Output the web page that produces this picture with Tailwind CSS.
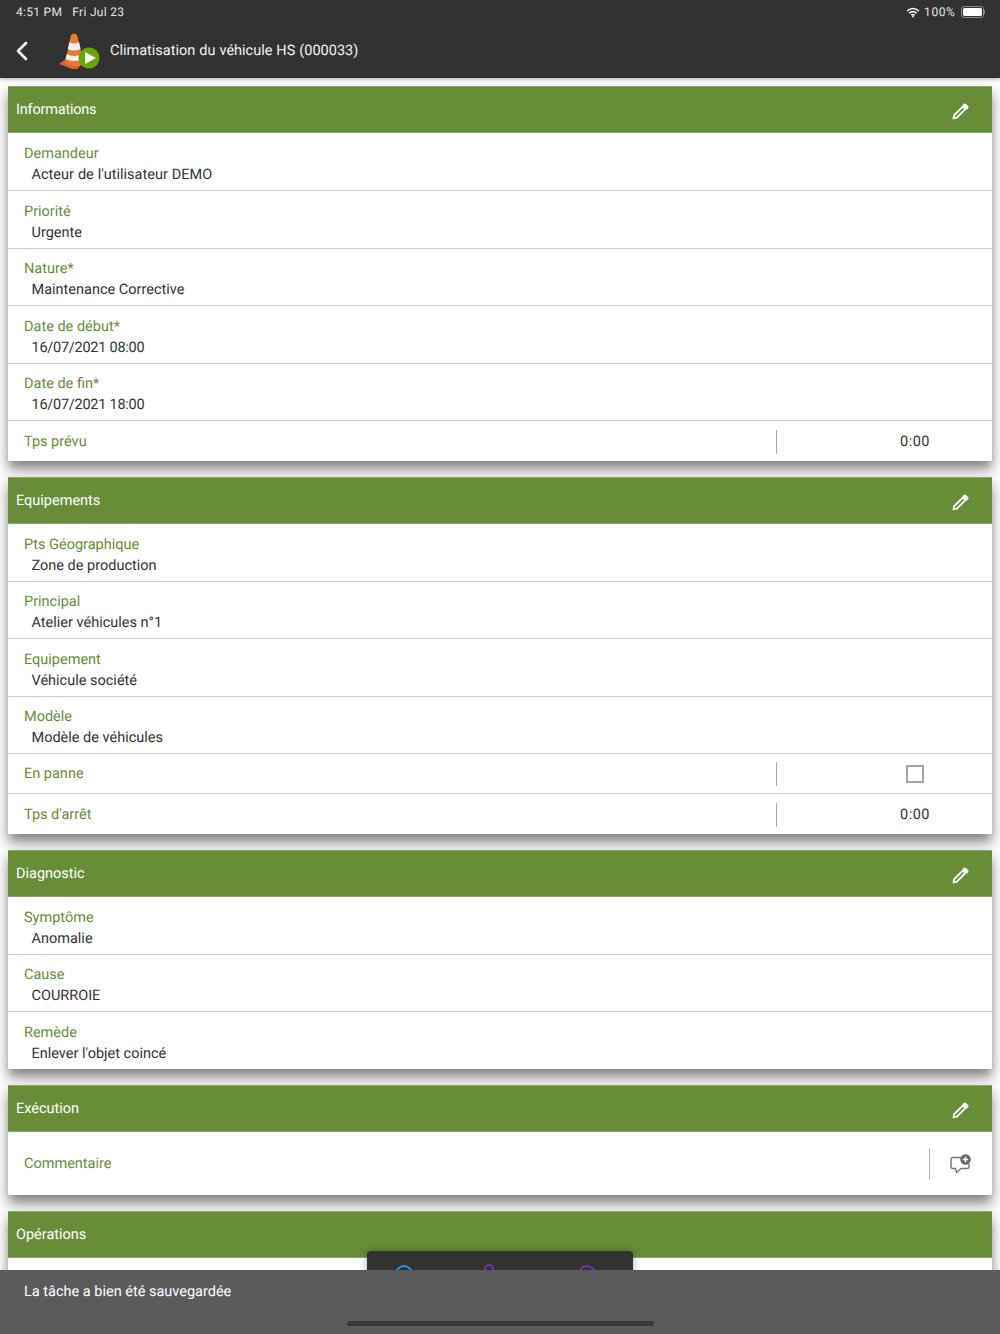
<!DOCTYPE html>
<html lang="fr">
<head>
    <meta charset="UTF-8">
    <title>Climatisation du véhicule HS</title>
    <script src="https://cdn.jsdelivr.net/npm/@tailwindcss/browser@4"></script>
</head>
<body class="font-['Roboto',sans-serif] bg-white [text-rendering:geometricPrecision]">
<div class="relative w-[1000px] h-[1334px] overflow-hidden bg-white">

    <!-- header -->
    <header class="h-[78px] bg-[#323232] text-white shadow-[0_1px_4px_rgba(0,0,0,0.35)] relative z-10">
        <div class="h-[24px] flex items-center justify-between pl-4 pr-[15px] text-[12px] text-[#e4e4e4] tracking-[0.3px]">
            <div class="flex gap-[10px]"><span>4:51 PM</span><span>Fri Jul 23</span></div>
            <div class="flex items-center gap-[4px]">
                <svg width="14" height="11" viewBox="0 0 14 11" fill="none" stroke="#fff" stroke-width="1.6">
                    <path d="M1 4 Q7 -1 13 4"/><path d="M3.2 6.2 Q7 3 10.8 6.2"/><path d="M5.3 8.2 Q7 7 8.7 8.2"/>
                    <circle cx="7" cy="9.5" r="0.9" fill="#fff" stroke="none"/>
                </svg>
                <span class="tracking-[0.6px]">100%</span>
                <div class="flex items-center ml-[1px]">
                    <div class="w-[23px] h-[12px] rounded-[3px] border border-[#8a8a8a] p-[1px]"><div class="w-full h-full bg-white rounded-[1.5px]"></div></div>
                    <div class="w-[1.5px] h-[4px] bg-[#8a8a8a] rounded-r"></div>
                </div>
            </div>
        </div>
        <div class="h-[54px] flex items-center">
            <svg class="ml-[16px]" width="13" height="20" viewBox="0 0 13 20" fill="none" stroke="#fff" stroke-width="2.6" stroke-linecap="round" stroke-linejoin="round"><path d="M10 2 L2 10 L10 18"/></svg>
            <svg class="ml-[29px]" width="42" height="40" viewBox="0 0 42 40">
                <path d="M1 33 L9 27 L27 30 L19 38 L14 38 Z" fill="#d9662a"/>
                <path d="M13 4 Q16 1 19 4 L26 33 Q16 38 7 32 Z" fill="#ea7a30"/>
                <path d="M11.5 11 Q16 14 21 11 L22.6 18 Q16 21 9.8 18 Z" fill="#f2f0ec"/>
                <path d="M8.8 23 Q16 27 24 23 L25 28 Q16 32 7.5 28 Z" fill="#f2f0ec"/>
                <circle cx="31" cy="27" r="10.5" fill="#6aa510"/>
                <path d="M27 21 L38 27 L27 33 Z" fill="#f7f7ef"/>
            </svg>
            <span class="ml-[10px] text-[14.5px] text-[#f2f2f2] [word-spacing:0.4px]">Climatisation du véhicule HS (000033)</span>
        </div>
    </header>

    <main class="pt-2 flex flex-col gap-4 px-2 text-[14.5px]">

        <!-- Informations -->
        <section class="bg-white shadow-[0_8px_12px_rgba(0,0,0,0.5)]">
            <div class="h-[47px] bg-[#678d39] border-y border-[#8ba769] text-white flex items-center justify-between pl-2 pr-[23px]">
                <span class="tracking-[-0.2px]">Informations</span>
                <svg class="mt-1" width="17" height="17" viewBox="0 0 17 17" fill="none" stroke="#fff" stroke-width="1.8" stroke-linejoin="round"><path d="M1.5 15.5 L2.3 12 L10.8 3.6 L13.3 6.1 L4.9 14.6 Z"/><path d="M12 1.8 Q12.8 1 13.6 1.8 L15.2 3.4 Q16 4.2 15.2 5 L14.6 5.6 L11.4 2.4 Z" fill="#fff"/></svg>
            </div>
            <div class="h-[58px] border-b border-[#cfcfcf] pl-4 pt-[11.5px]"><div class="leading-[18px] text-[#678d39]">Demandeur</div><div class="leading-[18px] mt-[3px] pl-[7.5px] text-[#333] [word-spacing:0.4px]">Acteur de l'utilisateur DEMO</div></div>
            <div class="h-[57.5px] border-b border-[#cfcfcf] pl-4 pt-[11.5px]"><div class="leading-[18px] text-[#678d39]">Priorité</div><div class="leading-[18px] mt-[3px] pl-[7.5px] text-[#333]">Urgente</div></div>
            <div class="h-[57.5px] border-b border-[#cfcfcf] pl-4 pt-[11.5px]"><div class="leading-[18px] text-[#678d39]">Nature*</div><div class="leading-[18px] mt-[3px] pl-[7.5px] text-[#333]">Maintenance Corrective</div></div>
            <div class="h-[57.5px] border-b border-[#cfcfcf] pl-4 pt-[11.5px]"><div class="leading-[18px] text-[#678d39]">Date de début*</div><div class="leading-[18px] mt-[3px] pl-[7.5px] text-[#333] tracking-[-0.25px]">16/07/2021 08:00</div></div>
            <div class="h-[57.5px] border-b border-[#cfcfcf] pl-4 pt-[11.5px]"><div class="leading-[18px] text-[#678d39]">Date de fin*</div><div class="leading-[18px] mt-[3px] pl-[7.5px] text-[#333] tracking-[-0.25px]">16/07/2021 18:00</div></div>
            <div class="h-[40px] pl-4 pt-[1px] flex items-center">
                <span class="flex-1 text-[#678d39]">Tps prévu</span>
                <div class="w-[216px] h-[24px] border-l border-[#a8a8a8] flex items-center justify-center pl-[61px] text-[#333] tracking-[0.5px]">0:00</div>
            </div>
        </section>

        <!-- Equipements -->
        <section class="bg-white shadow-[0_8px_12px_rgba(0,0,0,0.5)]">
            <div class="h-[47px] bg-[#678d39] border-y border-[#8ba769] text-white flex items-center justify-between pl-2 pr-[23px]">
                <span>Equipements</span>
                <svg class="mt-1" width="17" height="17" viewBox="0 0 17 17" fill="none" stroke="#fff" stroke-width="1.8" stroke-linejoin="round"><path d="M1.5 15.5 L2.3 12 L10.8 3.6 L13.3 6.1 L4.9 14.6 Z"/><path d="M12 1.8 Q12.8 1 13.6 1.8 L15.2 3.4 Q16 4.2 15.2 5 L14.6 5.6 L11.4 2.4 Z" fill="#fff"/></svg>
            </div>
            <div class="h-[57.5px] border-b border-[#cfcfcf] pl-4 pt-[11.5px]"><div class="leading-[18px] text-[#678d39]">Pts Géographique</div><div class="leading-[18px] mt-[3px] pl-[7.5px] text-[#333]">Zone de production</div></div>
            <div class="h-[57.5px] border-b border-[#cfcfcf] pl-4 pt-[11.5px]"><div class="leading-[18px] text-[#678d39]">Principal</div><div class="leading-[18px] mt-[3px] pl-[7.5px] text-[#333]">Atelier véhicules n°1</div></div>
            <div class="h-[57.5px] border-b border-[#cfcfcf] pl-4 pt-[11.5px]"><div class="leading-[18px] text-[#678d39]">Equipement</div><div class="leading-[18px] mt-[3px] pl-[7.5px] text-[#333]">Véhicule société</div></div>
            <div class="h-[57.5px] border-b border-[#cfcfcf] pl-4 pt-[11.5px]"><div class="leading-[18px] text-[#678d39]">Modèle</div><div class="leading-[18px] mt-[3px] pl-[7.5px] text-[#333]">Modèle de véhicules</div></div>
            <div class="h-[40px] border-b border-[#cfcfcf] pl-4 pt-[1px] flex items-center">
                <span class="flex-1 text-[#678d39]">En panne</span>
                <div class="w-[216px] h-[24px] border-l border-[#a8a8a8] flex items-center justify-center pl-[61px]"><div class="w-[18px] h-[18px] border-2 border-[#a5a5a5]"></div></div>
            </div>
            <div class="h-[40px] pl-4 pt-[1px] flex items-center">
                <span class="flex-1 text-[#678d39]">Tps d'arrêt</span>
                <div class="w-[216px] h-[24px] border-l border-[#a8a8a8] flex items-center justify-center pl-[61px] text-[#333] tracking-[0.5px]">0:00</div>
            </div>
        </section>

        <!-- Diagnostic -->
        <section class="bg-white shadow-[0_8px_12px_rgba(0,0,0,0.5)]">
            <div class="h-[47px] bg-[#678d39] border-y border-[#8ba769] text-white flex items-center justify-between pl-2 pr-[23px]">
                <span>Diagnostic</span>
                <svg class="mt-1" width="17" height="17" viewBox="0 0 17 17" fill="none" stroke="#fff" stroke-width="1.8" stroke-linejoin="round"><path d="M1.5 15.5 L2.3 12 L10.8 3.6 L13.3 6.1 L4.9 14.6 Z"/><path d="M12 1.8 Q12.8 1 13.6 1.8 L15.2 3.4 Q16 4.2 15.2 5 L14.6 5.6 L11.4 2.4 Z" fill="#fff"/></svg>
            </div>
            <div class="h-[57.5px] border-b border-[#cfcfcf] pl-4 pt-[11.5px]"><div class="leading-[18px] text-[#678d39]">Symptôme</div><div class="leading-[18px] mt-[3px] pl-[7.5px] text-[#333]">Anomalie</div></div>
            <div class="h-[57.5px] border-b border-[#cfcfcf] pl-4 pt-[11.5px]"><div class="leading-[18px] text-[#678d39]">Cause</div><div class="leading-[18px] mt-[3px] pl-[7.5px] text-[#333]">COURROIE</div></div>
            <div class="h-[57px] pl-4 pt-[11.5px]"><div class="leading-[18px] text-[#678d39]">Remède</div><div class="leading-[18px] mt-[3px] pl-[7.5px] text-[#333]">Enlever l'objet coincé</div></div>
        </section>

        <!-- Exécution -->
        <section class="bg-white shadow-[0_8px_12px_rgba(0,0,0,0.5)]">
            <div class="h-[47px] bg-[#678d39] border-y border-[#8ba769] text-white flex items-center justify-between pl-2 pr-[23px]">
                <span>Exécution</span>
                <svg class="mt-1" width="17" height="17" viewBox="0 0 17 17" fill="none" stroke="#fff" stroke-width="1.8" stroke-linejoin="round"><path d="M1.5 15.5 L2.3 12 L10.8 3.6 L13.3 6.1 L4.9 14.6 Z"/><path d="M12 1.8 Q12.8 1 13.6 1.8 L15.2 3.4 Q16 4.2 15.2 5 L14.6 5.6 L11.4 2.4 Z" fill="#fff"/></svg>
            </div>
            <div class="h-[63px] pl-4 flex items-center">
                <span class="flex-1 text-[#678d39]">Commentaire</span>
                <div class="w-[63px] h-[32px] border-l border-[#b5b5b5] flex items-center pl-[20px]">
                    <svg width="22" height="20" viewBox="0 0 22 20" fill="none">
                        <path d="M11 3.5 H3 Q1 3.5 1 5.5 V12.5 Q1 14.5 3 14.5 H5.5 L6.5 18.5 L11 14.5 H17 Q19 14.5 19 12.5 V10" stroke="#777" stroke-width="1.4" stroke-linejoin="round"/>
                        <circle cx="15.5" cy="5.5" r="5.2" fill="#666"/>
                        <path d="M15.5 2.8 V8.2 M12.8 5.5 H18.2" stroke="#fff" stroke-width="1.5"/>
                    </svg>
                </div>
            </div>
        </section>

        <!-- Opérations -->
        <section class="bg-white shadow-[0_8px_12px_rgba(0,0,0,0.5)]">
            <div class="h-[47px] bg-[#678d39] border-y border-[#8ba769] text-white flex items-center pl-2">Opérations</div>
            <div class="h-[80px]"></div>
        </section>
    </main>

    <!-- floating action bar, mostly hidden behind the toast -->
    <div class="absolute left-[367px] top-[1251px] w-[266px] h-[40px] bg-[#323232] rounded-t-[4px] shadow-[0_0_8px_rgba(0,0,0,0.3)]">
        <div class="absolute left-[28px] top-[14px] w-[18px] h-[18px] rounded-full border-2 border-[#2196f3]"></div>
        <div class="absolute left-[117px] top-[13px] w-[10px] h-[10px] rounded-full border-2 border-[#6f35b8]"></div>
        <div class="absolute left-[211px] top-[14px] w-[18px] h-[18px] rounded-full border-2 border-[#6f35b8]"></div>
    </div>

    <!-- toast -->
    <div class="absolute left-0 right-0 top-[1270px] h-[64px] bg-[#5b5b5b] text-[14.5px] text-white pl-6 pt-[13px] leading-[18px]">
        La tâche a bien été sauvegardée
        <div class="absolute left-[347px] top-[51px] w-[307px] h-[5px] rounded-full bg-[#3a3a3a]"></div>
    </div>
</div>
</body>
</html>
